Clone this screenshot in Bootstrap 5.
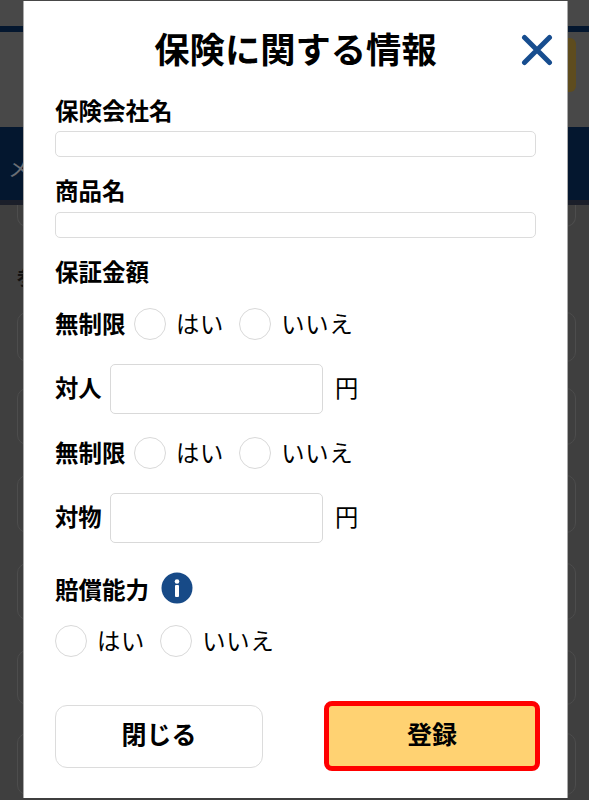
<!DOCTYPE html>
<html lang="ja">
<head>
<meta charset="utf-8">
<title>保険に関する情報</title>
<link href="https://cdn.jsdelivr.net/npm/bootstrap@5.3.0/dist/css/bootstrap.min.css" rel="stylesheet">
<style>
html,body{height:800px;overflow:hidden}
body{background:#3f3f3f;font-family:"Noto Sans CJK JP","Liberation Sans",sans-serif;color:#000;position:relative}
.bg-top{height:26px;background:#484848}
.bg-line{height:6px;background:#04172f}
.bg-head{height:95px;padding:6px 13px 0 0;background:#484848}
.bg-yellow{width:60px;height:54px;background:#5e4c1e;border-radius:6px}
.bg-nav{height:78px;background:#04172f;color:#6a6d74;font-size:22px;line-height:78px;padding-left:8px;border-bottom:5px solid #1b1f2a}
.bg-main{padding:0 13px 0 17px}
.bg-box{border:1px solid #4d4d4d;border-radius:10px;background:#3f3f3f}
.bg-b1{height:22px;border-top:0;border-radius:0 0 10px 10px;margin-bottom:37px}
.bg-title{font-size:20px;font-weight:700;color:#111;line-height:26px;margin-bottom:22px}
.bg-b2{height:50px;margin-bottom:26px}
.bg-b3{height:57px;margin-bottom:30px}
.bg-b4{height:58px;margin-bottom:30px}
.bg-b5{height:57px;margin-bottom:30px}
.bg-b6{height:55px;margin-bottom:28px}
.bg-b7{height:62px}
.sheet{position:absolute;left:23px;top:1px;width:545px;height:797px;background:#fff;border:1px solid #aaa;border-width:0 1px;padding:0 31px 0 31px}
.sheet-head{height:75px;margin-bottom:23px;padding-top:22px;position:relative}
.sheet-title{font-size:35.3px;font-weight:700;line-height:50px;text-align:center;margin:0}
.sheet-close{position:absolute;right:-17px;top:33px;width:32px;height:32px;padding:0;border:0;background:none;display:block}
.lbl{font-size:23.5px;font-weight:700;line-height:22px;height:26px;margin:0}
.lbl-gap{margin-bottom:6px}
.lbl-gap2{margin-bottom:7px}
.lbl-info{line-height:28px}
.txt-in{height:26px;padding:0 8px;border:1px solid #dcdcdc;border-radius:5px;box-shadow:none}
.grp{margin-bottom:22px}
.rad-row{height:32px;font-size:23.3px;line-height:30px}
.rad-row .form-check-input{width:32px;height:32px;margin:0;border:1px solid #d9d9d9;flex:none;float:none}
.rad-row .form-check{padding:0;margin:0;min-height:0;gap:10px}
.rad-row .form-check-label{font-weight:400;width:auto;letter-spacing:.8px;margin-bottom:2px}
.rad-row .yn-a{margin-right:15px}
.rad-head{margin-right:8px;width:71px;white-space:nowrap;line-height:30px;height:32px}
.amt-row{height:50px;font-size:23.3px}
.amt-lbl{font-weight:700;width:47px;margin:0 8px 3px 0;white-space:nowrap}
.amt-in{width:213px;height:50px;flex:none;border:1px solid #d9d9d9;border-radius:5px;margin-right:12px}
.amt-yen{margin-bottom:3px}
.m24{margin-bottom:24px}
.m23{margin-bottom:23px}
.m29{margin-bottom:29px}
.m21{margin-bottom:21px}
.m44{margin-bottom:44px}
.info-ic{margin-left:12px;width:32px;height:32px;flex:none}
.acts{height:70px;margin-right:-4px}
.btn-close-x{width:208px;height:63px;background:#fff;border:1px solid #dcdcdc;border-radius:12px;font-size:25px;font-weight:700;color:#000;padding:0 0 4px}
.btn-save{width:216px;height:70px;background:#ffd272;border:5px solid #f00;border-radius:8px;font-size:25px;font-weight:700;color:#000;padding:0 0 4px}
</style>
</head>
<body>
<div class="bg-top"></div>
<div class="bg-line"></div>
<div class="bg-head d-flex justify-content-end"><div class="bg-yellow"></div></div>
<div class="bg-nav">メ</div>
<div class="bg-main">
  <div class="bg-box bg-b1"></div>
  <div class="bg-title">参</div>
  <div class="bg-box bg-b2"></div>
  <div class="bg-box bg-b3"></div>
  <div class="bg-box bg-b4"></div>
  <div class="bg-box bg-b5"></div>
  <div class="bg-box bg-b6"></div>
  <div class="bg-box bg-b7"></div>
</div>

<div class="sheet">
  <div class="sheet-head">
    <h1 class="sheet-title">保険に関する情報</h1>
    <button class="sheet-close" type="button" aria-label="閉じる">
      <svg width="32" height="32" viewBox="0 0 32 32"><path d="M3.5 3.5 L28.5 28.5 M28.5 3.5 L3.5 28.5" stroke="#174d8f" stroke-width="5" stroke-linecap="round" fill="none"/></svg>
    </button>
  </div>

  <div class="grp">
    <label class="lbl lbl-gap d-block" for="f1">保険会社名</label>
    <input id="f1" class="form-control txt-in" type="text">
  </div>
  <div class="grp">
    <label class="lbl lbl-gap2 d-block" for="f2">商品名</label>
    <input id="f2" class="form-control txt-in" type="text">
  </div>
  <p class="lbl grp">保証金額</p>

  <div class="rad-row d-flex align-items-center m24">
    <span class="lbl rad-head">無制限</span>
    <div class="form-check d-flex align-items-center yn-a"><input class="form-check-input" type="radio" name="r1" id="r1a"><label class="form-check-label" for="r1a">はい</label></div>
    <div class="form-check d-flex align-items-center"><input class="form-check-input" type="radio" name="r1" id="r1b"><label class="form-check-label" for="r1b">いいえ</label></div>
  </div>
  <div class="amt-row d-flex align-items-center m23">
    <label class="amt-lbl" for="a1">対人</label>
    <input id="a1" class="form-control amt-in" type="text">
    <span class="amt-yen">円</span>
  </div>
  <div class="rad-row d-flex align-items-center m24">
    <span class="lbl rad-head">無制限</span>
    <div class="form-check d-flex align-items-center yn-a"><input class="form-check-input" type="radio" name="r2" id="r2a"><label class="form-check-label" for="r2a">はい</label></div>
    <div class="form-check d-flex align-items-center"><input class="form-check-input" type="radio" name="r2" id="r2b"><label class="form-check-label" for="r2b">いいえ</label></div>
  </div>
  <div class="amt-row d-flex align-items-center m29">
    <label class="amt-lbl" for="a2">対物</label>
    <input id="a2" class="form-control amt-in" type="text">
    <span class="amt-yen">円</span>
  </div>

  <div class="d-flex align-items-center m21">
    <span class="lbl lbl-info">賠償能力</span>
    <svg class="info-ic" viewBox="0 0 32 32"><circle cx="16" cy="16" r="15.5" fill="#174a87"/><circle cx="16" cy="9.5" r="2.3" fill="#fff"/><rect x="14" y="13" width="4" height="12" rx="1" fill="#fff"/></svg>
  </div>
  <div class="rad-row d-flex align-items-center m44">
    <div class="form-check d-flex align-items-center yn-a"><input class="form-check-input" type="radio" name="r3" id="r3a"><label class="form-check-label" for="r3a">はい</label></div>
    <div class="form-check d-flex align-items-center"><input class="form-check-input" type="radio" name="r3" id="r3b"><label class="form-check-label" for="r3b">いいえ</label></div>
  </div>

  <div class="acts d-flex justify-content-between align-items-center">
    <button class="btn btn-close-x" type="button">閉じる</button>
    <button class="btn btn-save" type="button">登録</button>
  </div>
</div>
<script src="https://cdn.jsdelivr.net/npm/bootstrap@5.3.0/dist/js/bootstrap.bundle.min.js"></script>
</body>
</html>
